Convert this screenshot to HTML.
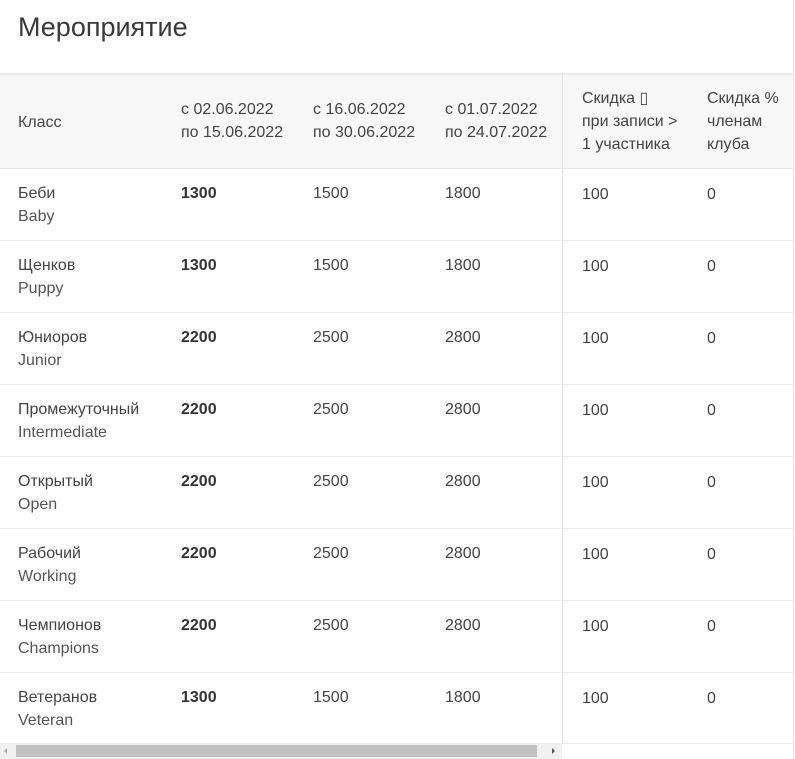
<!DOCTYPE html>
<html><head><meta charset="utf-8"><style>
body{margin:0;width:795px;height:759px;overflow:hidden;background:#fff;font-family:"Liberation Sans","Noto Sans CJK SC",sans-serif;color:#444;position:relative}
.t{position:absolute;left:18px;top:12px;font-size:27px;color:#3a3a3a}
.hl{position:absolute;left:0;top:73px;width:793px;height:2px;background:#ececec}
.vr{position:absolute;left:793px;top:0;width:1px;height:759px;background:#e6e6e6}
.hd{position:absolute;left:0;top:75px;width:793px;height:93px;background:#f8f8f8;border-bottom:1px solid #e8e8e8}
.vd{position:absolute;left:562px;top:75px;width:1px;height:669px;background:#e3e3e3}
.c{position:absolute;font-size:16px;line-height:23px;color:#444}
.b{font-weight:bold;color:#333}
.s{color:#555}
.rl{position:absolute;left:0;width:562px;height:1px;background:#ececec}
.rr{position:absolute;left:563px;width:230px;height:1px;background:#ececec}
.sb{position:absolute;left:0;top:744px;width:562px;height:15px;background:#f1f1f1}
.th{position:absolute;left:16px;top:745px;width:521px;height:12px;background:#c1c1c1}
</style></head><body>
<div class="t">Мероприятие</div>
<div class="hl"></div><div class="vr"></div>
<div class="hd"></div>
<div class="c" style="left:18px;top:111px">Класс</div>
<div class="c" style="left:181px;top:98px">с 02.06.2022<br>по 15.06.2022</div>
<div class="c" style="left:313px;top:98px">с 16.06.2022<br>по 30.06.2022</div>
<div class="c" style="left:445px;top:98px">с 01.07.2022<br>по 24.07.2022</div>
<div class="c" style="left:582px;top:87px">Скидка ▯<br>при записи &gt;<br>1 участника</div>
<div class="c" style="left:707px;top:87px">Скидка %<br>членам<br>клуба</div>
<div class="vd"></div>
<div id="rows"></div>
<script>
var d=[["Беби","Baby",1300,1500,1800],["Щенков","Puppy",1300,1500,1800],["Юниоров","Junior",2200,2500,2800],["Промежуточный","Intermediate",2200,2500,2800],["Открытый","Open",2200,2500,2800],["Рабочий","Working",2200,2500,2800],["Чемпионов","Champions",2200,2500,2800],["Ветеранов","Veteran",1300,1500,1800]];
var h="";for(var i=0;i<8;i++){var y=168+i*72,r=d[i];
if(i>0)h+='<div class="rl" style="top:'+y+'px"></div><div class="rr" style="top:'+y+'px"></div>';
h+='<div class="c" style="left:18px;top:'+(y+14)+'px">'+r[0]+'<br><span class="s">'+r[1]+'</span></div>';
h+='<div class="c b" style="left:181px;top:'+(y+14)+'px">'+r[2]+'</div>';
h+='<div class="c" style="left:313px;top:'+(y+14)+'px">'+r[3]+'</div>';
h+='<div class="c" style="left:445px;top:'+(y+14)+'px">'+r[4]+'</div>';
h+='<div class="c" style="left:582px;top:'+(y+15)+'px">100</div>';
h+='<div class="c" style="left:707px;top:'+(y+15)+'px">0</div>';}
h+='<div class="rl" style="top:743px"></div><div class="rr" style="top:743px"></div>';
document.getElementById("rows").innerHTML=h;
</script>
<div class="sb"></div><div class="th"></div>
<div style="position:absolute;left:4px;top:748px;width:0;height:0;border-top:3px solid transparent;border-bottom:3px solid transparent;border-right:3px solid #aaa"></div>
<div style="position:absolute;left:552px;top:748px;width:0;height:0;border-top:3px solid transparent;border-bottom:3px solid transparent;border-left:3px solid #555"></div>
</body></html>
